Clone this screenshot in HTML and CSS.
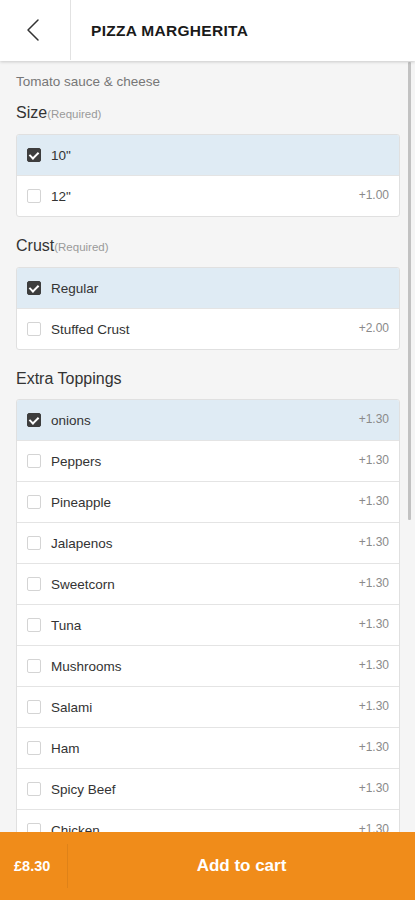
FILE: index.html
```html
<!DOCTYPE html>
<html lang="en">
<head>
<meta charset="utf-8">
<title>Pizza Margherita</title>
<link rel="stylesheet" href="styles.css">
</head>
<body>
<div class="app">
  <header class="topbar">
    <button class="back" aria-label="Back">
      <svg width="16" height="24" viewBox="0 0 16 24"><polyline points="12,2 2,12 12,22" fill="none" stroke="#333" stroke-width="1.5" stroke-linecap="round" stroke-linejoin="round"/></svg>
    </button>
    <h1 class="title">PIZZA MARGHERITA</h1>
  </header>

  <main class="content">
    <div class="scrollbar"></div>
    <p class="desc">Tomato sauce &amp; cheese</p>

    <section class="section">
      <h2 class="section-label">Size<span class="req">(Required)</span></h2>
      <div class="card">
        <div class="row selected"><span class="box checked"></span><span class="name">10"</span><span class="price"></span></div>
        <div class="row"><span class="box"></span><span class="name">12"</span><span class="price">+1.00</span></div>
      </div>
    </section>

    <section class="section">
      <h2 class="section-label">Crust<span class="req">(Required)</span></h2>
      <div class="card">
        <div class="row selected"><span class="box checked"></span><span class="name">Regular</span><span class="price"></span></div>
        <div class="row"><span class="box"></span><span class="name">Stuffed Crust</span><span class="price">+2.00</span></div>
      </div>
    </section>

    <section class="section">
      <h2 class="section-label">Extra Toppings</h2>
      <div class="card">
        <div class="row selected"><span class="box checked"></span><span class="name">onions</span><span class="price">+1.30</span></div>
        <div class="row"><span class="box"></span><span class="name">Peppers</span><span class="price">+1.30</span></div>
        <div class="row"><span class="box"></span><span class="name">Pineapple</span><span class="price">+1.30</span></div>
        <div class="row"><span class="box"></span><span class="name">Jalapenos</span><span class="price">+1.30</span></div>
        <div class="row"><span class="box"></span><span class="name">Sweetcorn</span><span class="price">+1.30</span></div>
        <div class="row"><span class="box"></span><span class="name">Tuna</span><span class="price">+1.30</span></div>
        <div class="row"><span class="box"></span><span class="name">Mushrooms</span><span class="price">+1.30</span></div>
        <div class="row"><span class="box"></span><span class="name">Salami</span><span class="price">+1.30</span></div>
        <div class="row"><span class="box"></span><span class="name">Ham</span><span class="price">+1.30</span></div>
        <div class="row"><span class="box"></span><span class="name">Spicy Beef</span><span class="price">+1.30</span></div>
        <div class="row"><span class="box"></span><span class="name">Chicken</span><span class="price">+1.30</span></div>
      </div>
    </section>
  </main>

  <footer class="cartbar">
    <div class="total">£8.30</div>
    <button class="add">Add to cart</button>
  </footer>
</div>
</body>
</html>
```

FILE: styles.css
```css
* { box-sizing: border-box; }
html, body { margin: 0; padding: 0; }
body {
  font-family: "Liberation Sans", Arial, Helvetica, sans-serif;
  color: #333;
  background: #f5f5f5;
}
.app {
  height: 900px;
  display: flex;
  flex-direction: column;
  overflow: hidden;
}
.topbar {
  flex: 0 0 61px;
  display: flex;
  align-items: stretch;
  background: #fff;
  box-shadow: 0 1px 3px rgba(0,0,0,0.18);
  position: relative;
  z-index: 2;
}
.back {
  width: 71px;
  border: 0;
  border-right: 1px solid #e2e2e2;
  background: transparent;
  padding: 0;
  display: flex;
  align-items: center;
  justify-content: center;
  margin-bottom: 1px;
}
.back svg { margin-left: -2px; }
.title {
  margin: 0;
  padding-left: 20px;
  font-size: 15.5px;
  font-weight: bold;
  color: #1a1a1a;
  display: flex;
  align-items: center;
  letter-spacing: 0.3px;
}
.content {
  flex: 1;
  position: relative;
  overflow: hidden;
  padding: 12px 15px 0 16px;
  background: #f5f5f5;
}
.scrollbar {
  position: absolute;
  right: 4px;
  top: 1px;
  width: 3px;
  height: 458px;
  background: #c2c2c2;
  border-radius: 1px;
}
.desc {
  margin: 0;
  font-size: 13.5px;
  line-height: 18px;
  color: #777;
}
.section { margin-top: 19px; }
.desc + .section { margin-top: 12px; }
.section-label {
  margin: 0 0 10px;
  font-size: 16px;
  font-weight: normal;
  line-height: 20px;
  color: #333;
}
.req {
  font-size: 11.5px;
  color: #9a9a9a;
}
.card {
  background: #fff;
  border: 1px solid #e0e0e0;
  border-radius: 3px;
  overflow: hidden;
}
.row {
  height: 41px;
  display: flex;
  align-items: center;
  padding: 0 10px;
  border-top: 1px solid #e4e4e4;
  font-size: 13.5px;
}
.row:first-child { height: 40px; border-top: 0; }
.row.selected { background: #dfebf4; }
.box {
  width: 14px;
  height: 14px;
  border: 1px solid #d4d4d4;
  border-radius: 2px;
  background: #fff;
  margin-right: 10px;
  position: relative;
  flex: 0 0 14px;
}
.box.checked {
  background: #3d3d3d;
  border-color: #3d3d3d;
}
.box.checked::after {
  content: "";
  position: absolute;
  left: 3px;
  top: 1px;
  width: 4px;
  height: 7px;
  border: solid #fff;
  border-width: 0 2px 2px 0;
  transform: rotate(45deg);
}
.name { flex: 1; color: #333; }
.price {
  font-size: 12px;
  color: #8a8a8a;
  margin-top: -2px;
}
.cartbar {
  flex: 0 0 68px;
  display: flex;
  align-items: center;
  background: #f08c1a;
  color: #fff;
  position: relative;
  z-index: 2;
}
.total {
  flex: 0 0 68px;
  padding-left: 14px;
  font-size: 14.5px;
  font-weight: bold;
  height: 44px;
  line-height: 44px;
  white-space: nowrap;
  border-right: 1px solid rgba(0,0,0,0.07);
}
.add {
  flex: 1;
  border: 0;
  background: transparent;
  color: #fff;
  font-family: "Liberation Sans", Arial, Helvetica, sans-serif;
  font-size: 17px;
  font-weight: bold;
  padding: 0;
  height: 68px;
}
```
